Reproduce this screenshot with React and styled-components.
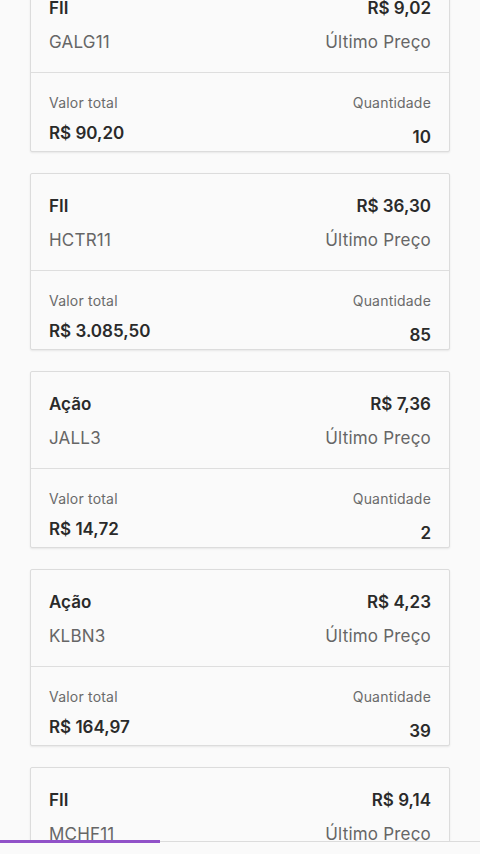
import React from "react";
import styled, { createGlobalStyle } from "styled-components";

const GlobalStyle = createGlobalStyle`
  html, body {
    margin: 0;
    padding: 0;
    background: #fafafa;
    font-family: Inter, "Noto Sans", sans-serif;
  }
`;

const Page = styled.div`
  width: 480px;
  height: 854px;
  display: flex;
  flex-direction: column;
  overflow: hidden;
  background: #fafafa;
`;

const Scroll = styled.div`
  flex: 1;
  overflow: hidden;
`;

const List = styled.div`
  display: flex;
  flex-direction: column;
  gap: 21px;
  padding: 0 30px;
  margin-top: -25px;
`;

const Card = styled.div`
  background: #fafafa;
  border: 1px solid #dcdcdc;
  border-radius: 2px;
  box-shadow: 0 1px 2px rgba(0, 0, 0, 0.08);
`;

const Top = styled.div`
  display: flex;
  flex-direction: column;
  gap: 10px;
  padding: 20px 18px 18px;
  border-bottom: 1px solid #dedede;
`;

const Bottom = styled.div`
  display: flex;
  justify-content: space-between;
  padding: 20px 18px 2px;
`;

const Row = styled.div`
  display: flex;
  justify-content: space-between;
  align-items: center;
  height: 24px;
`;

const Strong = styled.span`
  font-size: 17px;
  font-weight: 600;
  color: #2a2a2a;
`;

const Muted = styled.span`
  font-size: 17px;
  color: #666;
  letter-spacing: 0.2px;
`;

const Col = styled.div`
  display: flex;
  flex-direction: column;
  align-items: ${(p) => (p.$right ? "flex-end" : "flex-start")};
`;

const Label = styled.span`
  font-size: 14px;
  line-height: 20px;
  color: #6a6a6a;
  letter-spacing: 0.2px;
`;

const Value = styled.span`
  font-size: 17px;
  line-height: 24px;
  font-weight: 600;
  color: #2a2a2a;
  margin-top: ${(p) => (p.$right ? "12px" : "8px")};
`;

const Footer = styled.div`
  height: 12px;
  border-top: 1px solid #dcdcdc;
  background: #fafafa;
  position: relative;
`;

const Progress = styled.div`
  position: absolute;
  left: 0;
  top: -2px;
  height: 3px;
  background: #9152c8;
`;

const items = [
  { type: "FII", price: "R$ 9,02", ticker: "GALG11", total: "R$ 90,20", qty: "10" },
  { type: "FII", price: "R$ 36,30", ticker: "HCTR11", total: "R$ 3.085,50", qty: "85" },
  { type: "Ação", price: "R$ 7,36", ticker: "JALL3", total: "R$ 14,72", qty: "2" },
  { type: "Ação", price: "R$ 4,23", ticker: "KLBN3", total: "R$ 164,97", qty: "39" },
  { type: "FII", price: "R$ 9,14", ticker: "MCHF11", total: "R$ 91,40", qty: "10" },
];

export default function App() {
  return (
    <Page>
      <GlobalStyle />
      <Scroll>
        <List>
          {items.map((it) => (
            <Card key={it.ticker}>
              <Top>
                <Row>
                  <Strong>{it.type}</Strong>
                  <Strong>{it.price}</Strong>
                </Row>
                <Row>
                  <Muted>{it.ticker}</Muted>
                  <Muted>Último Preço</Muted>
                </Row>
              </Top>
              <Bottom>
                <Col>
                  <Label>Valor total</Label>
                  <Value>{it.total}</Value>
                </Col>
                <Col $right>
                  <Label>Quantidade</Label>
                  <Value $right>{it.qty}</Value>
                </Col>
              </Bottom>
            </Card>
          ))}
        </List>
      </Scroll>
      <Footer>
        <Progress style={{ width: `${(160 / 480) * 100}%` }} />
      </Footer>
    </Page>
  );
}
